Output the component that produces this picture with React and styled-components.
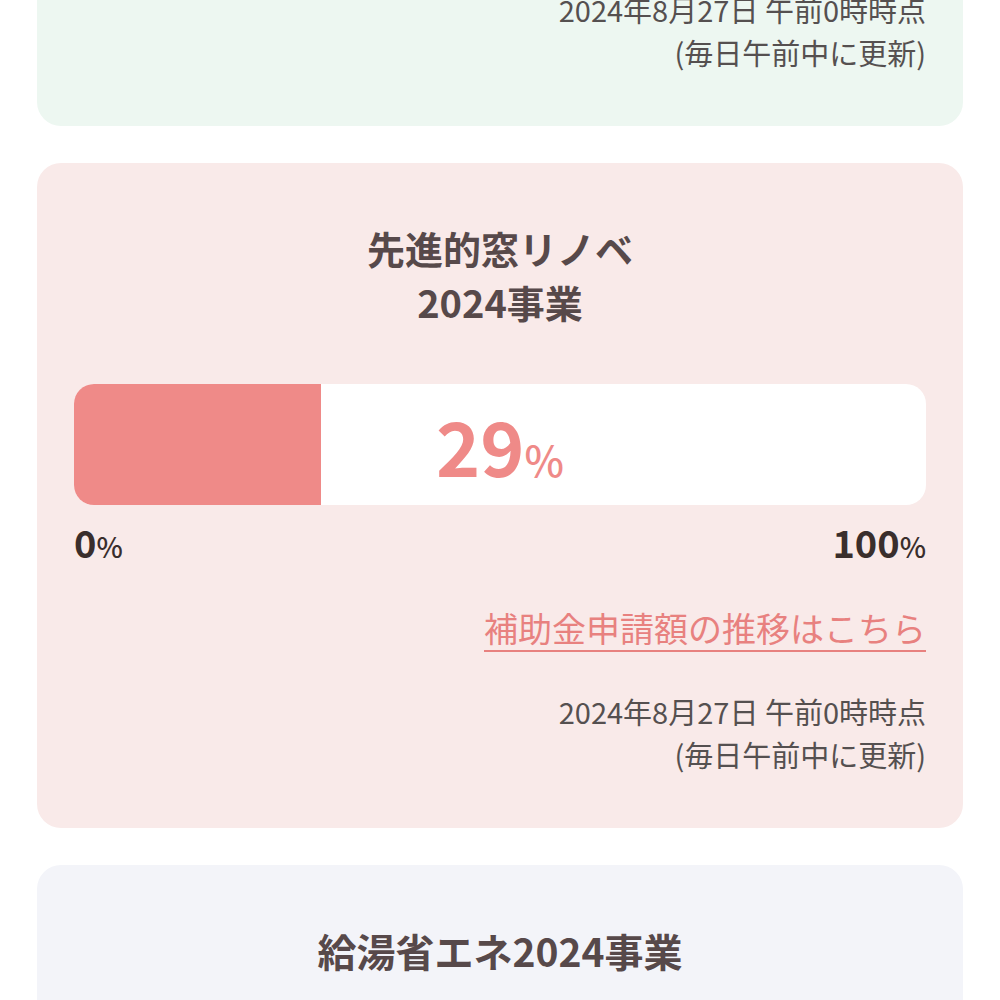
import React from "react";
import styled, { createGlobalStyle } from "styled-components";

const Global = createGlobalStyle`
  html, body {
    margin: 0;
    padding: 0;
    background: #ffffff;
    overflow: hidden;
  }
  body {
    font-family: "Noto Sans CJK JP", "Noto Sans", sans-serif;
    color: #4f4442;
  }
`;

const Page = styled.div`
  display: flex;
  flex-direction: column;
  gap: 37px;
  padding: 0 37px;
  width: 1000px;
  box-sizing: border-box;
`;

const Card = styled.section`
  background: ${(p) => p.$bg};
  border-radius: 24px;
  padding: 58px 37px 52px;
  display: flex;
  flex-direction: column;
`;

const TopCard = styled(Card)`
  margin-top: -42px;
  padding-top: 30px;
  border-radius: 0 0 24px 24px;
`;

const Title = styled.h2`
  margin: 0;
  text-align: center;
  font-size: ${(p) => p.$size || 38}px;
  line-height: 54px;
  font-weight: 700;
  color: #57494a;
`;

const Bar = styled.div`
  position: relative;
  margin-top: 55px;
  height: 121px;
  background: #ffffff;
  border-radius: 20px;
  overflow: hidden;
  display: flex;
  align-items: center;
  justify-content: center;
`;

const Fill = styled.div`
  position: absolute;
  left: 0;
  top: 0;
  bottom: 0;
  background: #ef8a88;
`;

const Percent = styled.div`
  position: relative;
  font-size: 75px;
  font-weight: 700;
  color: #ef8a88;
  line-height: 1;
  span {
    font-size: 42px;
    font-weight: 500;
  }
`;

const Scale = styled.div`
  display: flex;
  justify-content: space-between;
  margin-top: 17px;
  font-size: 38px;
  line-height: 40px;
  font-weight: 700;
  color: #3a2e2c;
  span {
    font-size: 28px;
    font-weight: 500;
  }
`;

const Link = styled.a`
  align-self: flex-end;
  margin-top: 42px;
  font-size: 34px;
  line-height: 40px;
  color: #e8817f;
  text-decoration: underline;
  text-underline-offset: 8px;
  text-decoration-thickness: 2px;
`;

const Updated = styled.p`
  margin: ${(p) => (p.$flush ? "0" : "42px 0 0")};
  text-align: right;
  font-size: 29px;
  line-height: 43px;
  color: #555050;
`;

const Spacer = styled.div`
  height: 200px;
`;

function Stamp({ flush }) {
  return (
    <Updated $flush={flush}>
      2024年8月27日 午前0時時点
      <br />
      (毎日午前中に更新)
    </Updated>
  );
}

export default function App() {
  const rate = 29;
  return (
    <>
      <Global />
      <Page>
        <TopCard $bg="#edf7f1">
          <Stamp flush />
        </TopCard>
        <Card $bg="#f9eae9">
          <Title>
            先進的窓リノベ
            <br />
            2024事業
          </Title>
          <Bar>
            <Fill style={{ width: `${rate}%` }} />
            <Percent>
              {rate}
              <span>%</span>
            </Percent>
          </Bar>
          <Scale>
            <div>
              0<span>%</span>
            </div>
            <div>
              100<span>%</span>
            </div>
          </Scale>
          <Link href="#">補助金申請額の推移はこちら</Link>
          <Stamp />
        </Card>
        <Card $bg="#f3f4f9">
          <Title $size={39}>給湯省エネ2024事業</Title>
          <Spacer />
        </Card>
      </Page>
    </>
  );
}
